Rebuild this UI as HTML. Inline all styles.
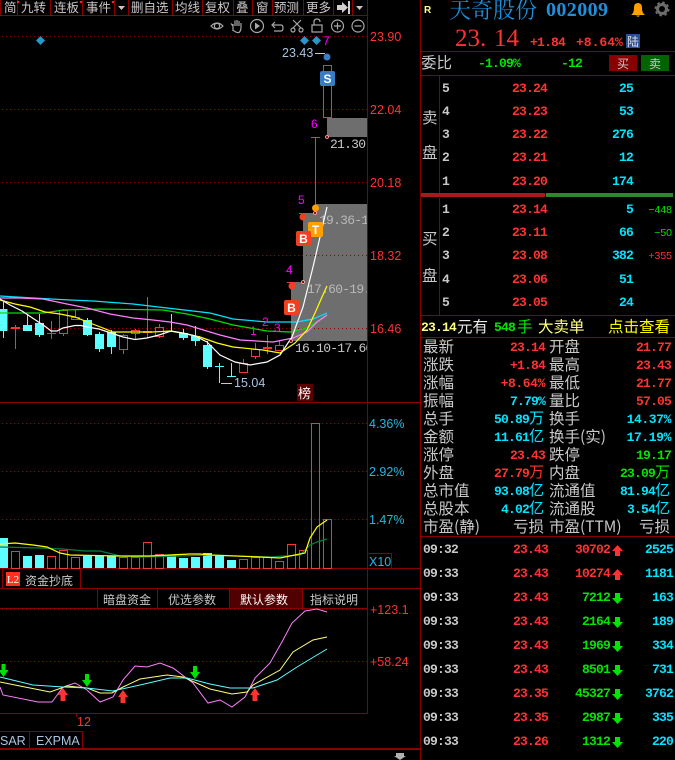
<!DOCTYPE html>
<html><head><meta charset="utf-8">
<style>
html,body{margin:0;padding:0;background:#000;width:675px;height:760px;overflow:hidden}
svg{display:block}
.c{font-family:"WenQuanYi Zen Hei","Noto Sans CJK SC",sans-serif;font-size:15.5px;fill:#c8c8c8}
.tb{font-family:"WenQuanYi Zen Hei","Noto Sans CJK SC",sans-serif;font-size:12.5px;fill:#c8c8c8}
.n{font-family:"Liberation Mono","WenQuanYi Zen Hei",monospace;font-weight:bold;font-size:13px;letter-spacing:-.8px}
.a{font-family:"Liberation Sans",sans-serif;font-size:12.5px}
.r{fill:#ff3232}.g{fill:#00e600}.b{fill:#00e5ff}.w{fill:#c8c8c8}.e{text-anchor:end}
.u{font-family:"WenQuanYi Zen Hei","Noto Sans CJK SC",sans-serif;font-weight:normal;font-size:15px;letter-spacing:0}
.m{font-family:"Liberation Sans",sans-serif;font-size:12px;fill:#f0f}
.ln{fill:none;shape-rendering:auto}
</style></head><body>
<svg width="675" height="760" viewBox="0 0 675 760" xmlns="http://www.w3.org/2000/svg">
<defs><clipPath id="cl"><rect x="0" y="0" width="367" height="400"/></clipPath></defs>
<rect width="675" height="760" fill="#000"/>

<!-- gray zones -->
<g fill="#6e6e6e" shape-rendering="crispEdges">
<polygon points="291,341 291,282 303,282 303,213 315,213 315,204 367,204 367,341"/>
<rect x="327" y="118" width="40" height="19"/>
</g>

<!-- frame lines -->
<g shape-rendering="crispEdges" stroke="#8a0000" fill="none">
<path d="M0 15.5H367.5M367.5 0V713.5M420.5 0V760M0 402.5H420M0 568.5H420M0 588.5H420M0 713.5H367.5"/>
<path d="M.5 0V15M17.5 0V15M50.5 0V15M82.5 0V15M114.5 0V15M128.5 0V15M172.5 0V15M202.5 0V15M233.5 0V15M252.5 0V15M272.5 0V15M303.5 0V15M333.5 0V15M352.5 0V15"/>
<path d="M2.5 569V588M80.5 569V588"/>
<path d="M97.5 589V608M157.5 589V608M229.5 589V608M302.5 589V608M0 608.5H367"/>
<path d="M0 731.5H82.5V748M29.5 732V748"/>
<path d="M76.5 713V717"/>
<path d="M420 51.5H675M420 75.5H675M439.5 75V193M439.5 198V315M420 315.5H675M420 337.5H675M420 536.5H675"/>
<path d="M368.5 553.5H391.5V568"/>
</g>
<rect x="0" y="748" width="420" height="2" fill="#8a0000"/>

<!-- dotted grid -->
<g stroke="#8a0000" stroke-dasharray="1 3" shape-rendering="crispEdges">
<path d="M2 36.5H367M2 109.5H367M2 182.5H367M2 255.5H367M2 328.5H367M2 423.5H367M2 471.5H367M2 519.5H367M2 609.5H367M2 661.5H367"/>
</g>

<!-- toolbar -->
<g class="tb">
<text x="4" y="12">简</text><text x="21" y="12">九转</text><text x="54" y="12">连板</text><text x="86" y="12">事件</text>
<text x="131" y="12">删自选</text><text x="175" y="12">均线</text><text x="205" y="12">复权</text><text x="236" y="12">叠</text><text x="256" y="12">窗</text><text x="274" y="12">预测</text><text x="306" y="12">更多</text>
</g>
<g fill="#ff2020"><rect x="17" y="1" width="2" height="2"/><rect x="80" y="1" width="2" height="2"/><rect x="112" y="1" width="2" height="2"/></g>
<polygon points="118,6 125,6 121.5,10" fill="#c8c8c8"/>
<polygon points="356,6 363,6 359.5,10" fill="#c8c8c8"/>
<g fill="#d0d0d0"><rect x="337" y="5" width="6" height="5"/><polygon points="342,2 348,7.5 342,13"/><rect x="348" y="1" width="2" height="13"/></g>

<!-- tool icons -->
<g fill="none" stroke="#a8a8a8" stroke-width="1.2">
<path d="M211 26Q217 20 223 26Q217 32 211 26Z"/><circle cx="217" cy="26" r="2.6"/>
<path d="M233 31V24M233 26L231 23.5M235 26V20.5M237 26V20M239 26V21M241 27V23M233 30Q236 33 239 32.5Q241 31 241 27"/>
<circle cx="257" cy="26" r="6.5"/><polygon points="255,22.5 260,26 255,29.500" fill="#a8a8a8" stroke="none"/>
<path d="M273 25H281Q283 25 283 28Q283 31 281 31H274M275 22L272 25L275 28"/>
<path d="M293 20L301 28M301 20L293 28"/><circle cx="293" cy="30" r="2"/><circle cx="301" cy="30" r="2"/>
<rect x="312" y="25" width="10" height="7"/><path d="M314 25V22Q314 19 317 19Q320 19 320 22"/>
<circle cx="337.500" cy="26" r="6"/><path d="M334 26H341M337.500 22.500V29.500"/>
<circle cx="358" cy="26" r="6"/><path d="M354.500 26H361.500"/>
</g>

<!-- diamonds -->
<g fill="#2a97c8">
<polygon points="40.500,36 45,40.500 40.500,45 36,40.500"/>
<polygon points="304.500,36 309,40.500 304.500,45 300,40.500"/>
<polygon points="316.500,36 321,40.500 316.500,45 312,40.500"/>
</g>

<!-- candles -->
<g stroke="#5cffff" fill="#5cffff" shape-rendering="crispEdges">
<path fill="none" d="M3.500 302V338M27.500 315V331M39.500 314V337M87.500 318V336M99.500 332V352M111.500 330V354M171.500 314V332M183.500 329V340M195.500 326V346M207.500 341V369"/>
<rect x="-1" y="309.500" width="8" height="21"/>
<rect x="23.500" y="325.500" width="8" height="5"/>
<rect x="35.500" y="323.500" width="8" height="11"/>
<rect x="83.500" y="320.500" width="8" height="14"/>
<rect x="95.500" y="334.500" width="8" height="14"/>
<rect x="107.500" y="332.500" width="8" height="14"/>
<path d="M167 331.500H176"/>
<rect x="179.500" y="333.500" width="8" height="4"/>
<rect x="191.500" y="336.500" width="8" height="4"/>
<rect x="203.500" y="345.500" width="8" height="21"/>
<path fill="none" d="M215 366.500H224M219.500 363V383M227 376.500H236M231.500 363V376"/>
</g>
<g stroke="#f03838" fill="none" shape-rendering="crispEdges">
<path d="M15.500 325V349M51.500 321V339M63.500 309V310M63.500 334V336M75.500 310V317M123.500 334V335M123.500 350V354M135.500 329V330M135.500 334V339M147.500 297V338M159.500 324V327M159.500 337V338M243.500 359V363M255.500 343V349M255.500 357V359M267.500 335V354M279.500 341V345M315.500 137V205"/>
<path d="M47 333.500H56M311 137.500H320M299 213.500H308M287 282.500H296"/>
<rect x="11" y="327" width="9" height="2" fill="#ff3232" stroke="none"/>
<rect x="143" y="331" width="9" height="2" fill="#ff3232" stroke="none"/>
<rect x="263" y="347" width="9" height="2" fill="#ff3232" stroke="none"/>
<rect x="59.500" y="310.500" width="8" height="23"/>
<rect x="71.500" y="317.500" width="8" height="2"/>
<rect x="119.500" y="335.500" width="8" height="14"/>
<rect x="131.500" y="330.500" width="8" height="3"/>
<rect x="155.500" y="327.500" width="8" height="9"/>
<rect x="239.500" y="363.500" width="8" height="9"/>
<rect x="251.500" y="349.500" width="8" height="7"/>
<rect x="275.500" y="345.500" width="8" height="5"/>
<rect x="323.500" y="65.500" width="8" height="52"/>
</g>

<!-- zone labels (under the MA lines) -->
<g font-family="Liberation Mono" font-size="13" fill="#c8c8c8" letter-spacing="-.75" clip-path="url(#cl)">
<text x="330" y="148">21.30-</text>
<text x="319" y="224" fill="#b8b8b8">19.36-1</text>
<text x="307" y="293" fill="#b8b8b8">17.60-19.</text>
<text x="295" y="352">16.10-17.60</text>
</g>

<!-- MA lines -->
<g class="ln" stroke-width="1.200">
<polyline stroke="#00e5ff" points="0,296 33,298 70,300 93,301 133,304 167,308 210,313 233,319 267,322 297,322 313,319 327,313"/>
<polyline stroke="#00e000" points="0,313 20,313 43,313 63,310 100,309 163,310 187,314 210,319 233,325 267,331 290,332 307,328 320,320 327,315"/>
<polyline stroke="#ff80ff" points="0,298 20,298 43,299 67,304 87,308 110,314 133,318 153,320 170,322 187,325 210,332 220,335 240,340 273,342 293,338 307,332 317,322 327,315"/>
<polyline stroke="#ffff00" points="0,300 15,304 30,307 45,312 60,314 75,317 90,323 103,328 113,332 133,332 153,332 170,331 187,334 200,337 217,343 233,347 263,350 280,353 295,343 307,330 315,313 322,297 327,286"/>
<polyline stroke="#fff" points="0,299 10,305 22,311 34,319 46,327 51,331 57,331 63,328 75,325.500 81,325.500 87,327 99,329 111,333 123,337 135,339.500 147,338 159,335 171,331 183,333 195,336 207,342 220,355 235,362 250,365 267,362 280,355 292,337 303,307 313,267 320,237 327,207"/>
</g>

<!-- markers -->
<g fill="#8a0000" stroke="#ffb0b0" stroke-width=".8"><circle cx="327" cy="137" r="1.500"/><circle cx="315" cy="213" r="1.500"/><circle cx="303" cy="282" r="1.500"/><circle cx="291" cy="341" r="1.500"/></g>
<circle cx="303" cy="217" r="3.500" fill="#f04020"/><circle cx="292" cy="286" r="3.500" fill="#f04020"/>
<circle cx="315.500" cy="208" r="3.500" fill="#ffa000"/>
<circle cx="327" cy="57" r="3.500" fill="#3a7cc4"/>
<rect x="320" y="71" width="15" height="15" rx="2" fill="#3a7cc4"/><text x="327.500" y="83" text-anchor="middle" font-family="Liberation Sans" font-weight="bold" font-size="12" fill="#fff">S</text>
<rect x="308" y="222" width="15" height="15" rx="2" fill="#ffa000"/><text x="315.500" y="234" text-anchor="middle" font-family="Liberation Sans" font-weight="bold" font-size="12" fill="#fff">T</text>
<rect x="296" y="231" width="15" height="15" rx="2" fill="#f04020"/><text x="303.500" y="243" text-anchor="middle" font-family="Liberation Sans" font-weight="bold" font-size="12" fill="#fff">B</text>
<rect x="284" y="300" width="15" height="15" rx="2" fill="#f04020"/><text x="291.500" y="312" text-anchor="middle" font-family="Liberation Sans" font-weight="bold" font-size="12" fill="#fff">B</text>

<g class="m">
<text x="323" y="45">7</text><text x="311" y="128">6</text><text x="298" y="204">5</text><text x="286" y="274">4</text>
<text x="250" y="335">1</text><text x="262" y="326">2</text><text x="274" y="332">3</text>
</g>

<g class="a" fill="#a8c4e0">
<text x="282" y="57">23.43</text><text x="234" y="387">15.04</text>
</g>
<path d="M315 53.500H325" stroke="#c8c8c8"/>
<path d="M221 383.500H232" stroke="#c8c8c8"/>
<rect x="297" y="384" width="16" height="17" fill="#5a0000"/>
<text x="298" y="398" class="c" style="font-size:13px;fill:#fff">榜</text>

<!-- y axis -->
<g class="a r">
<text x="370" y="41">23.90</text><text x="370" y="114">22.04</text><text x="370" y="187">20.18</text><text x="370" y="260">18.32</text><text x="370" y="333">16.46</text>
<text x="370" y="614">+123.1</text><text x="370" y="666">+58.24</text>
<text x="77" y="726">12</text>
</g>
<g class="a" fill="#20b8e0">
<text x="369" y="428">4.36%</text><text x="369" y="476">2.92%</text><text x="369" y="524">1.47%</text>
<text x="369" y="566">X10</text>
</g>

<!-- volume -->
<g fill="#5cffff" shape-rendering="crispEdges">
<rect x="0" y="538" width="8" height="30"/><rect x="23" y="556" width="9" height="12"/><rect x="35" y="555" width="9" height="13"/>
<rect x="83" y="556" width="9" height="12"/><rect x="95" y="556" width="9" height="12"/><rect x="107" y="556" width="9" height="12"/>
<rect x="167" y="555" width="9" height="13"/><rect x="179" y="558" width="9" height="10"/><rect x="191" y="557" width="9" height="11"/><rect x="203" y="553" width="9" height="15"/>
<rect x="215" y="556" width="9" height="12"/><rect x="227" y="560" width="9" height="8"/>
</g>
<g fill="none" stroke="#f03838" shape-rendering="crispEdges">
<rect x="11.500" y="551.500" width="8" height="17"/><rect x="47.500" y="556.500" width="8" height="12"/><rect x="59.500" y="550.500" width="8" height="18"/><rect x="71.500" y="557.500" width="8" height="11"/>
<rect x="119.500" y="557.500" width="8" height="11"/><rect x="131.500" y="557.500" width="8" height="11"/><rect x="143.500" y="542.500" width="8" height="26"/><rect x="155.500" y="554.500" width="8" height="14"/>
<rect x="239.500" y="559.500" width="8" height="9"/><rect x="251.500" y="557.500" width="8" height="11"/><rect x="263.500" y="557.500" width="8" height="11"/><rect x="275.500" y="561.500" width="8" height="7"/>
<rect x="287.500" y="544.500" width="8" height="24"/><rect x="299.500" y="550.500" width="8" height="18"/><rect x="311.500" y="423.500" width="8" height="145"/><rect x="323.500" y="519.500" width="8" height="49"/>
</g>
<g class="ln" stroke-width="1.200">
<polyline stroke="#008040" points="0,547 40,548 63,549 85,551 100,551 120,556 140,557 180,556 210,555 270,557 300,555 310,545 317,542 327,539"/>
<polyline stroke="#ffff00" points="0,544 15,543 33,545 47,547 60,553 70,555 118,556 150,556 190,554 200,554 210,555 260,557 280,558 295,555 305,553 310,538 317,527 327,520"/>
</g>

<!-- L2 tab -->
<rect x="6" y="572" width="14" height="14" fill="#ff3020"/>
<text x="13" y="583" text-anchor="middle" font-family="Liberation Serif" font-size="11" fill="#fff">L2</text>
<text x="25" y="585" class="c" style="font-size:12px">资金抄底</text>
<rect x="230" y="589" width="72" height="19" fill="#500000"/>
<g class="c" style="font-size:12px">
<text x="103" y="604">暗盘资金</text><text x="168" y="604">优选参数</text><text x="240" y="604" style="fill:#fff">默认参数</text><text x="310" y="604">指标说明</text>
</g>

<!-- indicator -->
<g class="ln" stroke-width="1">
<polyline stroke="#ff80ff" points="0,687 3,695 38,702 52,702 63,687 75,683 87,690 100,702 113,697 123,680 135,666 147,667 160,663 173,668 193,683 208,703 220,700 232,707 245,697 255,678 270,663 283,640 292,623 305,611 317,609 327,612"/>
<polyline stroke="#ffff80" points="0,682 20,686 50,692 67,686 87,688 100,693 112,693 123,687 140,679 167,675 183,677 210,689 232,694 247,692 253,685 280,670 293,652 313,640 327,637"/>
<polyline stroke="#5cffff" points="0,677 33,685 63,687 87,688 113,691 140,685 170,678 187,678 210,684 230,688 253,688 277,680 297,667 327,649"/>
</g>
<g fill="#00e000">
<polygon points="1.500,664 5.500,664 5.500,670 8.500,670 3.500,677 -1.500,670 1.500,670"/>
<polygon points="85,674 89,674 89,680 92,680 87,687 82,680 85,680"/>
<polygon points="193,666 197,666 197,672 200,672 195,679 190,672 193,672"/>
</g>
<g fill="#ff3232">
<polygon points="63,688 68,695 65.500,695 65.500,701 60.500,701 60.500,695 58,695"/>
<polygon points="123,690 128,697 125.500,697 125.500,703 120.500,703 120.500,697 118,697"/>
<polygon points="255,688 260,695 257.500,695 257.500,701 252.500,701 252.500,695 250,695"/>
</g>

<!-- bottom tabs -->
<g class="a" fill="#a8c4e0"><text x="0" y="745">SAR</text><text x="36" y="745">EXPMA</text></g>
<polygon points="396,753 404,753 404,756 406,756 400,760 394,756 396,756" fill="#b0b0b0"/>

<!-- RIGHT PANEL header -->
<text x="424" y="13" font-family="Liberation Sans" font-weight="bold" font-size="10" fill="#ffff80">R</text>
<text x="449" y="18" font-family="Noto Serif CJK SC,serif" font-size="22" fill="#1e8fd8">天奇股份</text>
<text x="546" y="16" font-family="Liberation Serif" font-weight="bold" font-size="20" fill="#1e8fd8" letter-spacing=".4">002009</text>
<path d="M631 15Q634 13 634 8Q634 3 638 3Q642 3 642 8Q642 13 645 15ZM636 15.500Q638 18 640 15.500Z" fill="#ffa000"/>
<circle cx="662" cy="9" r="4.500" fill="none" stroke="#6c6c6c" stroke-width="3"/>
<circle cx="662" cy="9" r="6.500" fill="none" stroke="#6c6c6c" stroke-width="2" stroke-dasharray="2.500 2.600"/>

<text x="455" y="46" font-family="Liberation Serif" font-size="25" fill="#ff3232">23.</text>
<text x="494" y="46" font-family="Liberation Serif" font-size="25" fill="#ff3232">14</text>
<text x="530" y="46" class="n r">+1.84</text>
<text x="576" y="46" class="n r" style="letter-spacing:0">+8.64%</text>
<rect x="626" y="34" width="14" height="14" fill="#2a4f9a"/>
<text x="627" y="46" class="c" style="font-size:12px;fill:#e0e0e0">陆</text>

<text x="421" y="68" class="c">委比</text>
<text x="478" y="67" class="n g">-1.09%</text>
<text x="561" y="67" class="n g">-12</text>
<rect x="609" y="55" width="28" height="16" fill="#8a0000"/><rect x="641" y="55" width="28" height="16" fill="#006400"/>
<text x="617" y="68" class="c" style="font-size:12px">买</text><text x="649" y="68" class="c" style="font-size:12px">卖</text>

<text x="422" y="123" class="c">卖</text><text x="422" y="158" class="c">盘</text>
<text x="422" y="244" class="c">买</text><text x="422" y="281" class="c">盘</text>

<rect x="421" y="193" width="124" height="4" fill="#a81a1a"/><rect x="546" y="193" width="127" height="4" fill="#2a8a2a"/>

<g class="n">
<g class="w"><text x="442" y="92">5</text><text x="442" y="115">4</text><text x="442" y="138">3</text><text x="442" y="161">2</text><text x="442" y="185">1</text>
<text x="442" y="213">1</text><text x="442" y="236">2</text><text x="442" y="259">3</text><text x="442" y="283">4</text><text x="442" y="306">5</text></g>
<g class="r"><text x="512" y="92">23.24</text><text x="512" y="115">23.23</text><text x="512" y="138">23.22</text><text x="512" y="161">23.21</text><text x="512" y="185">23.20</text>
<text x="512" y="213">23.14</text><text x="512" y="236">23.11</text><text x="512" y="259">23.08</text><text x="512" y="283">23.06</text><text x="512" y="306">23.05</text></g>
<g class="b e"><text x="633" y="92">25</text><text x="633" y="115">53</text><text x="633" y="138">276</text><text x="633" y="161">12</text><text x="633" y="185">174</text>
<text x="633" y="213">5</text><text x="633" y="236">66</text><text x="633" y="259">382</text><text x="633" y="283">51</text><text x="633" y="306">24</text></g>
</g>
<g font-family="Liberation Sans" font-size="10.500" text-anchor="end">
<text x="672" y="213" fill="#00e600">−448</text><text x="672" y="236" fill="#00e600">−50</text><text x="672" y="259" fill="#ff3232">+355</text>
</g>

<text x="421" y="331" class="n" style="fill:#ffff80">23.14</text>
<text x="457" y="332" class="c" style="fill:#e8e8e8">元有</text>
<text x="494" y="331" class="n g">548</text>
<text x="517" y="332" class="c" style="fill:#00e600">手</text>
<text x="538" y="332" class="c" style="fill:#ffff80">大卖单</text>
<text x="608" y="332" class="c" style="fill:#ffff00">点击查看</text>

<!-- stats labels -->
<g class="c">
<text x="423" y="352">最新</text><text x="423" y="370">涨跌</text><text x="423" y="388">涨幅</text><text x="423" y="406">振幅</text><text x="423" y="424">总手</text><text x="423" y="442">金额</text><text x="423" y="460">涨停</text><text x="423" y="478">外盘</text><text x="423" y="496">总市值</text><text x="423" y="514">总股本</text><text x="423" y="532">市盈(静)</text>
<text x="549" y="352">开盘</text><text x="549" y="370">最高</text><text x="549" y="388">最低</text><text x="549" y="406">量比</text><text x="549" y="424">换手</text><text x="549" y="442">换手(实)</text><text x="549" y="460">跌停</text><text x="549" y="478">内盘</text><text x="549" y="496">流通值</text><text x="549" y="514">流通股</text><text x="549" y="532">市盈(TTM)</text>
<text x="544" y="532" text-anchor="end">亏损</text><text x="670" y="532" text-anchor="end">亏损</text>
</g>
<g class="n e">
<text x="545" y="351" class="r">23.14</text><text x="545" y="369" class="r">+1.84</text><text x="545" y="387" class="r" style="letter-spacing:-.4px">+8.64%</text><text x="545" y="405" class="b">7.79%</text>
<text x="544" y="423" class="b">50.89<tspan class="u">万</tspan></text><text x="544" y="441" class="b">11.61<tspan class="u">亿</tspan></text><text x="545" y="459" class="r">23.43</text><text x="544" y="477" class="r">27.79<tspan class="u">万</tspan></text><text x="544" y="495" class="b">93.08<tspan class="u">亿</tspan></text><text x="544" y="513" class="b">4.02<tspan class="u">亿</tspan></text>
<text x="671" y="351" class="r">21.77</text><text x="671" y="369" class="r">23.43</text><text x="671" y="387" class="r">21.77</text><text x="671" y="405" class="r">57.05</text><text x="671" y="423" class="b" style="letter-spacing:-.4px">14.37%</text><text x="671" y="441" class="b" style="letter-spacing:-.4px">17.19%</text><text x="671" y="459" class="g">19.17</text>
<text x="670" y="477" class="g">23.09<tspan class="u">万</tspan></text><text x="670" y="495" class="b">81.94<tspan class="u">亿</tspan></text><text x="670" y="513" class="b">3.54<tspan class="u">亿</tspan></text>
</g>

<!-- ticks -->
<g class="n w">
<text x="423" y="553">09:32</text><text x="423" y="577">09:33</text><text x="423" y="601">09:33</text><text x="423" y="625">09:33</text><text x="423" y="649">09:33</text><text x="423" y="673">09:33</text><text x="423" y="697">09:33</text><text x="423" y="721">09:33</text><text x="423" y="745">09:33</text>
</g>
<g class="n r">
<text x="513" y="553">23.43</text><text x="513" y="577">23.43</text><text x="513" y="601">23.43</text><text x="513" y="625">23.43</text><text x="513" y="649">23.43</text><text x="513" y="673">23.43</text><text x="513" y="697">23.35</text><text x="513" y="721">23.35</text><text x="513" y="745">23.26</text>
</g>
<g class="n e">
<text x="610" y="553" class="r">30702</text><text x="610" y="577" class="r">10274</text><text x="610" y="601" class="g">7212</text><text x="610" y="625" class="g">2164</text><text x="610" y="649" class="g">1969</text><text x="610" y="673" class="g">8501</text><text x="610" y="697" class="g">45327</text><text x="610" y="721" class="g">2987</text><text x="610" y="745" class="g">1312</text>
</g>
<g class="n b e">
<text x="673" y="553">2525</text><text x="673" y="577">1181</text><text x="673" y="601">163</text><text x="673" y="625">189</text><text x="673" y="649">334</text><text x="673" y="673">731</text><text x="673" y="697">3762</text><text x="673" y="721">335</text><text x="673" y="745">220</text>
</g>
<g fill="#ff3232">
<polygon points="617.500,545 623,551 620,551 620,556 615,556 615,551 612,551"/>
<polygon points="617.500,569 623,575 620,575 620,580 615,580 615,575 612,575"/>
</g>
<g fill="#00e600">
<polygon points="615,593 620,593 620,598 623,598 617.500,604 612,598 615,598"/>
<polygon points="615,617 620,617 620,622 623,622 617.500,628 612,622 615,622"/>
<polygon points="615,641 620,641 620,646 623,646 617.500,652 612,646 615,646"/>
<polygon points="615,665 620,665 620,670 623,670 617.500,676 612,670 615,670"/>
<polygon points="615,689 620,689 620,694 623,694 617.500,700 612,694 615,694"/>
<polygon points="615,713 620,713 620,718 623,718 617.500,724 612,718 615,718"/>
<polygon points="615,737 620,737 620,742 623,742 617.500,748 612,742 615,742"/>
</g>
</svg>
</body></html>
